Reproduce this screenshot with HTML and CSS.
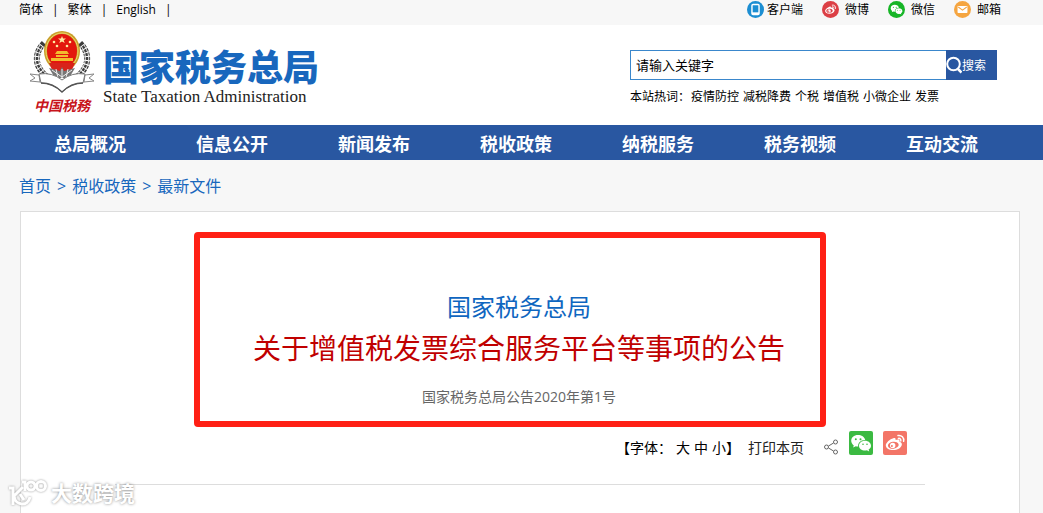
FILE: index.html
```html
<!DOCTYPE html>
<html lang="zh-CN">
<head>
  <meta charset="UTF-8" />
  <meta name="viewport" content="width=device-width, initial-scale=1.0"/>
  <title>国家税务总局</title>
  <link rel="stylesheet" href="styles.css">
</head>
<body>
  <!-- shared logos -->
  <svg class="symbols" aria-hidden="true">
    <symbol id="wechat" viewBox="0 0 24 24">
      <path fill="#fff" d="M9 4C4.900 4 2.200 6.600 2.200 9.800c0 1.900 1 3.500 2.600 4.600l-.7 2.200 2.700-1.300c.8.200 1.500.3 2.400.3-.6-3.900 2.800-7 7-6.700C15.500 6 12.500 4 9 4z"/>
      <path fill="#fff" d="M16 9.800c-3.400 0-6 2.200-6 4.900s2.600 4.900 6 4.900c.7 0 1.300-.1 1.900-.3l2.300 1.200-.6-1.900c1.500-1 2.400-2.300 2.400-3.900 0-2.700-2.600-4.900-6-4.900z"/>
      <g fill="currentColor"><circle cx="6.800" cy="8.200" r="1"/><circle cx="11.500" cy="8.200" r="1"/><circle cx="14" cy="13.300" r=".8"/><circle cx="18" cy="13.300" r=".8"/></g>
    </symbol>
    <symbol id="weibo" viewBox="0 0 24 24">
      <path fill="#fff" d="M10.300 7.200c1.300-.5 2.700-.2 2.300 1.900 2.300-.9 4.600-.8 3.900 1.700 1.800.6 2.700 1.700 2.300 3.300-.7 3-4.500 5-8.600 5-4 0-7.500-1.800-7.400-4.900.1-2.600 4.100-6.100 7.500-7z"/>
      <ellipse cx="10.300" cy="14.200" rx="5.400" ry="3.500" fill="currentColor" transform="rotate(-8 10.300 14.200)"/>
      <circle cx="9.700" cy="14.400" r="2.700" fill="#fff"/>
      <circle cx="8.900" cy="14.900" r="1" fill="currentColor"/>
      <path fill="none" stroke="#fff" stroke-width="1.500" stroke-linecap="round" d="M15 4.500c3.500-.6 6.400 2.200 5.600 5.800M15.400 7.400c1.600-.3 2.700.9 2.400 2.500"/>
    </symbol>
  </svg>

  <div class="topbar">
    <div class="langs">
      <a href="#">简体</a><span>|</span><a href="#">繁体</a><span>|</span><a href="#">English</a><span>|</span>
    </div>
    <div class="channels">
      <a href="#" class="app">
        <svg viewBox="0 0 24 24"><circle cx="12" cy="12" r="12" fill="#1c8ed2"/><rect x="7" y="5" width="10" height="14" rx="1.500" fill="none" stroke="#fff" stroke-width="2"/><path d="M7 16h10v3H7z" fill="#fff"/></svg>
        客户端</a>
      <a href="#">
        <svg viewBox="0 0 24 24" color="#dc3f45"><circle cx="12" cy="12" r="12" fill="currentColor"/><use href="#weibo" x="2" y="2" width="20" height="20"/></svg>
        微博</a>
      <a href="#">
        <svg viewBox="0 0 24 24" color="#16b526"><circle cx="12" cy="12" r="12" fill="currentColor"/><use href="#wechat" x="2" y="2" width="20" height="20"/></svg>
        微信</a>
      <a href="#">
        <svg viewBox="0 0 24 24"><circle cx="12" cy="12" r="12" fill="#f5a540"/><rect x="5" y="7" width="14" height="10" rx="1" fill="#fff"/><path d="M6 8.500l6 4.500 6-4.500" fill="none" stroke="#f5a540" stroke-width="1.500"/></svg>
        邮箱</a>
    </div>
  </div>

  <header class="header">
    <a href="#" class="logo">
      <span class="emblem">
        <svg viewBox="0 0 66 64">
          <!-- wheat ears -->
          <g fill="none" stroke="#3c3c3c" stroke-width="6" stroke-dasharray="3 1">
            <path d="M15 13C4 24 5 40 23 50"/>
            <path d="M51 13c11 11 10 27-8 37"/>
          </g>
          <g fill="none" stroke="#eee" stroke-width="1">
            <path d="M14 16C6 27 9 39 23 49M11 15C3 27 5 38 18 48"/>
            <path d="M52 16c8 11 5 23-9 33M55 15c8 12 6 23-7 33"/>
          </g>
          <ellipse cx="33" cy="21" rx="18" ry="20" fill="#c9a02c"/>
          <ellipse cx="33" cy="21" rx="16" ry="18" fill="none" stroke="#ecd568" stroke-width="1"/>
          <ellipse cx="33" cy="21" rx="15" ry="17" fill="#e3160d"/>
          <path fill="#ffe9a0" d="M33 6l1 2.500h3l-2.300 1.800 1 2.700-2.700-1.600-2.700 1.600 1-2.700L29 8.500h3z"/>
          <g fill="#ffe9a0"><circle cx="25" cy="12" r="1.300"/><circle cx="41" cy="12" r="1.300"/><circle cx="28" cy="16" r="1.300"/><circle cx="38" cy="16" r="1.300"/></g>
          <path fill="#f2bd2e" d="M28 21h10l2 3H26zM27 25h12v2H27zM22 28h22v3H22z"/>
          <path fill="#d8231a" d="M20 33h26l-4 9H24z"/>
          <path fill="#777" d="M20 38l11 3 2-4 2 4 11-3-6 10H26z"/>
          <path fill="none" stroke="#eee" stroke-width="1" d="M23 40l10 7 10-7M33 39v9M27 39l2 9M39 39l-2 9"/>
          <!-- ribbon -->
          <path fill="#fff" stroke="#888" stroke-width="1" d="M1 44l9 1 1 7-10-1 5-3zM65 44l-9 1-1 7 10-1-5-3z"/>
          <path fill="#fff" stroke="#777" stroke-width="1" d="M10 44q13-2 23 6 10-8 23-6l-2 9q-12 0-21 9-9-9-21-9z"/>
          <path fill="none" stroke="#555" stroke-width="1.500" d="M12 53q12 0 21 9 9-9 21-9"/>
        </svg>
        <span class="script">中国税務</span>
      </span>
      <span class="names">
        <strong>国家税务总局</strong>
        <span class="en">State Taxation Administration</span>
      </span>
    </a>
    <div class="search">
      <form class="search-form">
        <input type="text" value="请输入关键字" aria-label="请输入关键字">
        <button type="submit">
          <svg viewBox="0 0 16 18"><circle cx="7.500" cy="8" r="6.300" fill="none" stroke="#fff" stroke-width="2"/><path d="M12 13l3.500 3.500" stroke="#fff" stroke-width="2.500"/></svg>搜索</button>
      </form>
      <div class="hot">
        <span>本站热词：</span>
        <a href="#">疫情防控</a>
        <a href="#">减税降费</a>
        <a href="#">个税</a>
        <a href="#">增值税</a>
        <a href="#">小微企业</a>
        <a href="#">发票</a>
      </div>
    </div>
  </header>

  <nav class="nav">
    <a href="#">总局概况</a>
    <a href="#">信息公开</a>
    <a href="#">新闻发布</a>
    <a href="#">税收政策</a>
    <a href="#">纳税服务</a>
    <a href="#">税务视频</a>
    <a href="#">互动交流</a>
  </nav>

  <div class="crumbs">
    <a href="#">首页</a><span>&gt;</span><a href="#">税收政策</a><span>&gt;</span><a href="#">最新文件</a>
  </div>

  <main class="panel">
    <article class="article">
      <div class="title-box">
        <h2>国家税务总局</h2>
        <h1>关于增值税发票综合服务平台等事项的公告</h1>
        <p>国家税务总局公告2020年第1号</p>
      </div>
      <div class="tools">
        <div class="font-size">
          <span>【字体：</span>
          <button type="button">大</button>
          <button type="button">中</button>
          <button type="button">小</button><span>】</span>
        </div>
        <button type="button" class="print">打印本页</button>
        <div class="share">
          <svg class="share-mark" viewBox="0 0 15 16"><g fill="none" stroke="#666" stroke-width="1"><circle cx="2.500" cy="8" r="2"/><circle cx="11.500" cy="3" r="2"/><circle cx="11.500" cy="13" r="2"/><path d="M4.500 7l5-3M4.500 9l5 3"/></g></svg>
          <a href="#" class="wechat" aria-label="微信"><svg viewBox="0 0 24 24"><use href="#wechat"/></svg></a>
          <a href="#" class="weibo" aria-label="微博"><svg viewBox="0 0 24 24"><use href="#weibo"/></svg></a>
        </div>
      </div>
    </article>
  </main>

  <div class="watermark">
    <svg viewBox="0 0 40 28">
      <g fill="none" stroke="#fff" stroke-width="3">
        <path d="M1 9h4v17M15 8L6 17c1 10 14 11 16 1M12 15l4 6"/>
        <path d="M14 3h3v9"/>
        <circle cx="23" cy="7" r="4"/>
        <circle cx="33" cy="7" r="4.500"/>
      </g>
    </svg>
    <span>大数跨境</span>
  </div>
</body>
</html>
```
FILE: styles.css
```css
* {
  box-sizing: border-box;
}
body {
  margin: 0;
  min-height: 100vh;
  display: flex;
  flex-direction: column;
  background: #f7f7f7;
  color: #000;
  font-family: "Open Sans", "Noto Sans CJK SC", sans-serif;
  font-size: 12px;
}
a {
  color: inherit;
  text-decoration: none;
}
button {
  padding: 0;
  border: none;
  background: none;
  color: inherit;
  font: inherit;
  cursor: pointer;
}
svg {
  display: block;
  flex: none;
}
.symbols {
  display: none;
}

/* top bar */
.topbar {
  display: flex;
  justify-content: space-between;
  height: 25px;
  padding: 0 42px 0 19px;
  line-height: 20px;
}
.langs {
  display: flex;
  gap: 9px;
}
.channels {
  display: flex;
  gap: 19px;
}
.channels a {
  display: flex;
  align-items: center;
  gap: 6px;
  height: 19px;
}
.channels .app {
  gap: 3px;
}
.channels svg {
  width: 17px;
  height: 17px;
}

/* header */
.header {
  display: flex;
  justify-content: space-between;
  height: 100px;
  padding: 5px 46px 0 29px;
  background: #fff;
}
.logo {
  display: flex;
  gap: 8px;
}
.emblem {
  width: 66px;
}
.emblem svg {
  width: 66px;
  height: 64px;
}
.script {
  display: block;
  color: #c8141c;
  font-family: "Noto Sans CJK SC", sans-serif;
  font-size: 14px;
  font-style: italic;
  font-weight: bold;
  line-height: 22px;
  text-align: center;
}
.names {
  padding-top: 16px;
}
.names strong {
  display: block;
  color: #1867bd;
  font-family: "Noto Sans CJK SC", sans-serif;
  font-size: 36px;
  font-weight: 900;
  line-height: 38px;
}
.en {
  display: block;
  padding-top: 3px;
  color: #222;
  font-family: "Liberation Serif", serif;
  font-size: 17px;
  line-height: 20px;
}
.search {
  width: 367px;
  padding-top: 20px;
}
.search-form {
  display: flex;
  height: 30px;
}
.search-form input {
  flex: 1;
  min-width: 0;
  padding: 0 5px 2px;
  border: 1px solid #3a87cc;
  border-right: none;
  background: #fff;
  font-family: inherit;
  font-size: 13px;
}
.search-form button {
  display: flex;
  align-items: center;
  width: 51px;
  background: #2957a1;
  color: #fff;
}
.search-form svg {
  width: 16px;
  height: 18px;
}
.hot {
  display: flex;
  gap: 4px;
  padding-top: 7px;
  line-height: 20px;
  white-space: nowrap;
}
.hot span {
  margin-right: -3px;
}

/* main navigation */
.nav {
  display: flex;
  height: 35px;
  padding: 0 30px 0 19px;
  background: #2957a1;
  color: #fff;
  font-size: 18px;
  font-weight: bold;
  line-height: 38px;
}
.nav a {
  flex: 1;
  text-align: center;
}

.crumbs {
  display: flex;
  gap: 6px;
  height: 51px;
  padding: 0 19px;
  color: #1867bd;
  font-size: 16px;
  line-height: 53px;
}

/* article */
.panel {
  flex: 1;
  margin: 0 23px 0 20px;
  padding: 20px 24px 0;
  border: 1px solid #ddd;
  border-bottom: none;
  background: #fff;
}
.article {
  max-width: 810px;
  margin: 0 auto;
  border-bottom: 1px solid #ddd;
}
.title-box {
  max-width: 632px;
  height: 195px;
  margin: 0 auto 0 79px;
  padding: 51px 0 0 18px;
  border: 6px solid #ff2015;
  border-radius: 4px;
  text-align: center;
}
.title-box h2 {
  margin: 0;
  color: #0f66c0;
  font-size: 24px;
  font-weight: normal;
  line-height: 36px;
}
.title-box h1 {
  margin: 0;
  color: #c00000;
  font-size: 28px;
  font-weight: normal;
  line-height: 46px;
}
.title-box p {
  margin: 16px 0 0;
  color: #666;
  font-size: 14px;
  line-height: 20px;
}
.tools {
  display: flex;
  justify-content: flex-end;
  align-items: flex-start;
  gap: 8px;
  height: 57px;
  padding: 4px 18px 0 0;
  font-size: 14px;
  line-height: 34px;
}
.font-size {
  display: flex;
  gap: 4px;
}
.font-size button + span {
  margin-left: -4px;
}
.print {
  color: #222;
}
.share {
  display: flex;
  gap: 10px;
  margin-left: 12px;
}
.share-mark {
  width: 15px;
  height: 16px;
  margin-top: 8px;
}
.share a {
  width: 24px;
  height: 24px;
  border-radius: 2px;
}
.wechat {
  background: #3bba42;
  color: #3bba42;
}
.weibo {
  background: #f37567;
  color: #f37567;
}

/* stamp over the lower left corner */
.watermark {
  position: absolute;
  left: 8px;
  bottom: 6px;
  display: flex;
  align-items: center;
  gap: 3px;
  color: #fff;
  font-size: 21px;
  font-weight: bold;
  line-height: 28px;
  text-shadow: 0 0 3px #888;
}
.watermark svg {
  width: 40px;
  height: 28px;
  filter: drop-shadow(0 0 1px #999);
}
```
